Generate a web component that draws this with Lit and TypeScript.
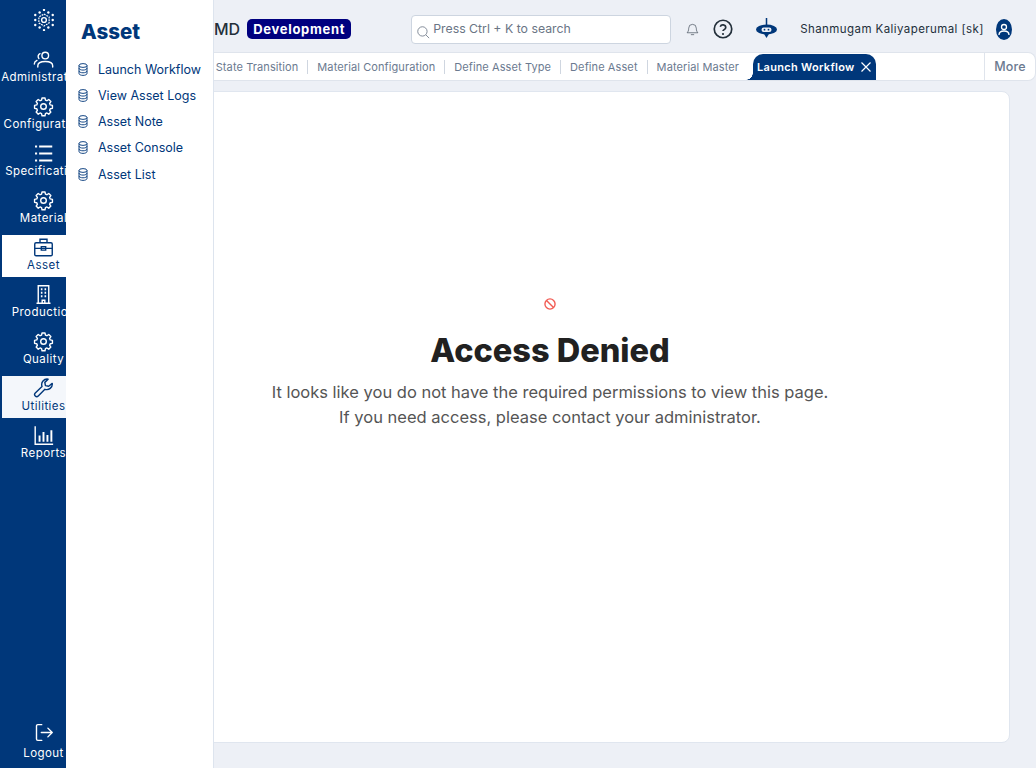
import { html, css, LitElement, svg } from 'lit';
import { customElement } from 'lit/decorators.js';

const gear = svg`<path d="M10.3 3.2h3.400l.5 2.500 1.700.7 2.100-1.400 2.400 2.400-1.400 2.100.7 1.700 2.500.5v3.400l-2.500.5-.7 1.700 1.400 2.100-2.400 2.400-2.100-1.400-1.700.7-.5 2.500h-3.400l-.5-2.500-1.700-.7-2.100 1.400-2.400-2.400 1.400-2.100-.7-1.700-2.500-.5v-3.400l2.500-.5.7-1.700-1.400-2.100 2.400-2.400 2.100 1.400 1.700-.7z" stroke-linejoin="round" transform="translate(0 -1)"/><circle cx="12" cy="12" r="3.200"/>`;

const icons: Record<string, unknown> = {
  people: svg`<circle cx="14" cy="7.500" r="3.800"/><path d="M5.500 20.500v-1.300c0-3.200 3.500-5 8.500-5s8.500 1.800 8.500 5v1.300" stroke-linecap="round"/><path d="M8 5.300a3.500 3.500 0 0 0-1.300 5.500M4.500 13c-1.800.9-3 2.300-3 4.200" stroke-linecap="round"/>`,
  gear,
  list: svg`<path d="M7 4h15M7 12h15M7 20h15" stroke-width="2.200"/><path d="M2.300 4h2.400M2.300 12h2.400M2.300 20h2.400" stroke-width="2.200"/>`,
  case: svg`<rect x="2" y="6.500" width="20" height="15" rx="1.500"/><path d="M8 6.500V2.500h8v4M2 13h20M9.500 11h5v4h-5z"/>`,
  building: svg`<path d="M6 22V2h12v20M4 22h16M10.500 22v-3.500h3V22"/><path d="M9 6h1.800M13.200 6H15M9 10h1.800M13.200 10H15M9 14h1.800M13.200 14H15" stroke-width="2.200"/>`,
  wrench: svg`<path d="M22 6.200a6.300 6.300 0 0 1-8.400 6.700L6 20.600a2.400 2.400 0 0 1-3.400-3.400l7.700-7.600a6.300 6.300 0 0 1 7-8.300L13.500 5l.7 3.700 3.700.7z" stroke-linejoin="round"/>`,
  chart: svg`<path d="M2.500 1.500v20.500h20.500"/><path d="M7.500 12v7M12 8v11M16.500 11.500V19M21 6v13" stroke-width="2.200"/>`,
  logout: svg`<path d="M10 3H5.500A1.500 1.500 0 0 0 4 4.500v15A1.500 1.500 0 0 0 5.500 21H10M9.500 12H22M17 7l5 5-5 5" stroke-linecap="round" stroke-linejoin="round"/>`,
};

const railItems = [
  { label: 'Administration', icon: 'people' },
  { label: 'Configuration', icon: 'gear' },
  { label: 'Specification', icon: 'list' },
  { label: 'Material', icon: 'gear' },
  { label: 'Asset', icon: 'case', state: 'active' },
  { label: 'Production', icon: 'building' },
  { label: 'Quality', icon: 'gear' },
  { label: 'Utilities', icon: 'wrench', state: 'hover' },
  { label: 'Reports', icon: 'chart' },
];

const menuItems = ['Launch Workflow', 'View Asset Logs', 'Asset Note', 'Asset Console', 'Asset List'];
const tabs = ['State Transition', 'Material Configuration', 'Define Asset Type', 'Define Asset', 'Material Master'];

// outer hexagon of dots for the logo: corners and edge midpoints
const logoDots = [...Array(6).keys()].flatMap((i) => {
  const a = (Math.PI / 3) * i - Math.PI / 2;
  const b = a + Math.PI / 3;
  const cx = 12 + Math.cos(a) * 11;
  const cy = 12 + Math.sin(a) * 11;
  const nx = 12 + Math.cos(b) * 11;
  const ny = 12 + Math.sin(b) * 11;
  return [
    [cx, cy],
    [(cx + nx) / 2, (cy + ny) / 2],
  ];
});

@customElement('app-root')
export class AppRoot extends LitElement {
  static styles = css`
    :host {
      display: block;
      position: relative;
      width: 1036px;
      height: 768px;
      overflow: hidden;
      background: #edf0f6;
      font-family: Inter, 'Noto Sans', sans-serif;
    }
    svg {
      display: block;
      flex: none;
      fill: none;
      stroke: currentColor;
      stroke-width: 1.6;
    }
    .shell {
      display: flex;
      height: 100%;
    }
    .rail {
      flex: none;
      width: 66px;
      height: 100%;
      box-sizing: border-box;
      overflow: hidden;
      display: flex;
      flex-direction: column;
      background: #00377a;
      color: #fff;
    }
    .logo {
      flex: none;
      height: 47px;
      width: 87px;
      display: flex;
      justify-content: center;
      padding-top: 9px;
      box-sizing: border-box;
    }
    .logo svg {
      width: 22px;
      height: 22px;
    }
    .rail-item {
      flex: none;
      box-sizing: border-box;
      width: 83px;
      height: 42px;
      margin: 0 0 5px 2px;
      padding-top: 2px;
      display: flex;
      flex-direction: column;
      align-items: center;
      font-size: 11.5px;
      line-height: 16px;
      letter-spacing: 0.45px;
      white-space: nowrap;
    }
    .rail-item svg {
      width: 21px;
      height: 21px;
    }
    .rail-item span {
      margin-top: -1px;
    }
    .rail-item.active {
      background: #fff;
      color: #00377a;
    }
    .rail-item.hover {
      background: #f4f7fb;
      color: #00377a;
    }
    .rail-item.logout {
      margin-top: auto;
      margin-bottom: 7px;
      height: auto;
      padding-top: 0;
    }
    .rail-item.logout svg {
      margin-bottom: 3px;
    }
    .flyout {
      position: absolute;
      left: 66px;
      top: 0;
      bottom: 0;
      width: 148px;
      box-sizing: border-box;
      background: #fff;
      border-right: 1px solid #dde4ee;
      color: #00377a;
      z-index: 2;
    }
    .flyout h2 {
      margin: 17px 0 10px 15px;
      font-size: 20.5px;
      line-height: 29px;
      font-weight: 800;
    }
    .flyout ul {
      list-style: none;
      margin: 0;
      padding: 0 0 0 12px;
    }
    .flyout li {
      display: flex;
      align-items: center;
      gap: 10px;
      height: 26.25px;
      font-size: 12.5px;
      white-space: nowrap;
    }
    .flyout li svg {
      width: 10px;
      height: 13px;
      stroke-width: 1;
    }
    .main {
      flex: 1;
      min-width: 0;
      display: flex;
      flex-direction: column;
    }
    .header {
      flex: none;
      height: 52px;
      box-sizing: border-box;
      padding: 6px 0 0 148px;
      display: flex;
      align-items: center;
      color: #232f3a;
    }
    .title {
      font-size: 16px;
      font-weight: 500;
    }
    .env {
      margin-left: 7px;
      padding: 0 6px;
      height: 20px;
      border-radius: 5px;
      background: #00007f;
      color: #fff;
      font-size: 13px;
      font-weight: 700;
      line-height: 20px;
      letter-spacing: 0.7px;
    }
    .search {
      flex: none;
      margin-left: 60px;
      width: 260px;
      height: 29px;
      box-sizing: border-box;
      border: 1px solid #cdd5e0;
      border-radius: 4px;
      background: #fff;
      display: flex;
      align-items: center;
      gap: 3px;
      padding: 0 0 2px 4px;
      color: #6a7585;
      font-size: 12.3px;
    }
    .search svg {
      width: 14px;
      height: 14px;
      margin-top: 7px;
      stroke-width: 1.4;
    }
    .bell {
      margin-left: 15px;
      width: 13px;
      height: 13px;
      color: #46505c;
      stroke-width: 1.300;
    }
    .help {
      margin-left: 14px;
      width: 20px;
      height: 20px;
    }
    .bot {
      margin: -2px 0 0 23px;
      width: 21px;
      height: 20px;
      color: #00377a;
    }
    .user {
      margin-left: 23px;
      font-size: 11.5px;
      letter-spacing: 0.42px;
      white-space: nowrap;
    }
    .avatar {
      margin-left: 12px;
      width: 16px;
      height: 21px;
      color: #00377a;
    }
    .tabbar {
      flex: none;
      height: 29px;
      box-sizing: border-box;
      display: flex;
      background: #fff;
      border: 1px solid #dfe4ec;
      border-left: 0;
      border-radius: 0 8px 8px 0;
      color: #6b7a90;
      font-size: 11px;
      letter-spacing: 0.1px;
    }
    .tabs {
      flex: 1;
      min-width: 0;
      overflow: hidden;
      display: flex;
      justify-content: flex-end;
      align-items: center;
      padding-right: 108px;
      white-space: nowrap;
    }
    .tab {
      flex: none;
      padding: 0 9px;
      line-height: 14px;
      border-right: 1px solid #cfd6e0;
    }
    .tab:nth-last-child(2) {
      border-right: 0;
      margin-right: 5px;
    }
    .active-tab {
      flex: none;
      position: relative;
      align-self: flex-end;
      width: 123px;
      height: 26px;
      box-sizing: border-box;
      padding-left: 4px;
      display: flex;
      align-items: center;
      gap: 5px;
      background: #00377a;
      border-radius: 10px 10px 0 0;
      color: #fff;
      font-weight: 600;
      letter-spacing: 0.3px;
    }
    .active-tab::before {
      content: '';
      position: absolute;
      left: -7px;
      bottom: 0;
      width: 7px;
      height: 7px;
      background: radial-gradient(circle at 0 0, transparent 6.500px, #00377a 7px);
    }
    .active-tab svg {
      width: 12px;
      height: 12px;
      stroke-width: 1.2;
    }
    .more {
      flex: none;
      width: 51px;
      box-sizing: border-box;
      border-left: 1px solid #dfe4ec;
      text-align: center;
      font-size: 12.5px;
      font-weight: 500;
      line-height: 28px;
    }
    .card {
      flex: 1;
      margin: 10px 26px 25px 24px;
      box-sizing: border-box;
      background: #fff;
      border: 1px solid #e0e6ef;
      border-radius: 8px;
      display: flex;
      flex-direction: column;
      align-items: center;
      padding-top: 206px;
      text-align: center;
    }
    .card svg {
      width: 12px;
      height: 12px;
      color: #f25c54;
      stroke-width: 1.500;
    }
    .card h1 {
      margin: 20px 0 8px;
      color: #212121;
      font-size: 32.5px;
      line-height: 42px;
      font-weight: 800;
    }
    .card p {
      margin: 0;
      color: #555;
      font-size: 16.5px;
      line-height: 25px;
    }
  `;

  render() {
    return html`
      <div class="shell">
        <nav class="rail">
          <div class="logo">
            <svg viewBox="0 0 24 24">
              ${logoDots.map(([x, y]) => svg`<circle cx=${x} cy=${y} r="1.300" fill="currentColor" stroke="none"></circle>`)}
              <path d="M12 5.500l5.600 3.250v6.500L12 18.500l-5.600-3.250v-6.500z" stroke-width="1.300" stroke-dasharray="2 1"></path>
              <circle cx="12" cy="12" r="2.600" stroke-width="1.500"></circle>
            </svg>
          </div>
          ${railItems.map(
            (item) => html`
              <div class="rail-item ${item.state ?? ''}">
                <svg viewBox="0 0 24 24">${icons[item.icon]}</svg>
                <span>${item.label}</span>
              </div>
            `
          )}
          <div class="rail-item logout">
            <svg viewBox="0 0 24 24">${icons.logout}</svg>
            <span>Logout</span>
          </div>
        </nav>
        <div class="main">
          <header class="header">
            <span class="title">MD</span>
            <span class="env">Development</span>
            <div class="search">
              <svg viewBox="0 0 24 24"><circle cx="11" cy="11" r="8"></circle><path d="M17 17l5.500 5.500"></path></svg>
              <span>Press Ctrl + K to search</span>
            </div>
            <svg class="bell" viewBox="0 0 24 24">
              <path d="M12 2.500a7 7 0 0 0-7 7c0 5-1.500 7-3 8.500h20c-1.500-1.500-3-3.500-3-8.500a7 7 0 0 0-7-7zM9 21.500h6"></path>
            </svg>
            <svg class="help" viewBox="0 0 24 24">
              <circle cx="12" cy="12" r="10.500" stroke-width="2"></circle>
              <path d="M8.700 9.300a3.400 3.400 0 0 1 6.600 1c0 2.300-3.300 2.600-3.300 4.200" stroke-width="2"></path>
              <circle cx="12" cy="18" r="1.300" fill="currentColor" stroke="none"></circle>
            </svg>
            <svg class="bot" viewBox="0 0 21 20">
              <path d="M10.500 0v7" stroke-width="1.500"></path>
              <ellipse cx="10.500" cy="11.500" rx="10.500" ry="5" fill="currentColor" stroke="none"></ellipse>
              <path d="M7.500 15h6l-3 5z" fill="currentColor" stroke="none"></path>
              <rect x="5.500" y="9.500" width="10" height="4.500" rx="2.250" fill="#edf0f6" stroke="none"></rect>
              <circle cx="8.500" cy="11.700" r="0.900" fill="currentColor" stroke="none"></circle>
              <circle cx="12.500" cy="11.700" r="0.900" fill="currentColor" stroke="none"></circle>
            </svg>
            <span class="user">Shanmugam Kaliyaperumal [sk]</span>
            <svg class="avatar" viewBox="0 0 16 21">
              <ellipse cx="8" cy="10.500" rx="8" ry="10.500" fill="currentColor" stroke="none"></ellipse>
              <circle cx="8" cy="8" r="2.500" stroke="#fff" stroke-width="1.300"></circle>
              <path d="M3 16c0-3 2-4 5-4s5 1 5 4" stroke="#fff" stroke-width="1.300"></path>
            </svg>
          </header>
          <div class="tabbar">
            <div class="tabs">
              ${tabs.map((tab) => html`<span class="tab">${tab}</span>`)}
              <span class="active-tab">
                Launch Workflow
                <svg viewBox="0 0 12 12"><path d="M1.500 1.500l9 9M10.500 1.500l-9 9"></path></svg>
              </span>
            </div>
            <div class="more">More</div>
          </div>
          <section class="card">
            <svg viewBox="0 0 13 13"><circle cx="6.500" cy="6.500" r="5.500"></circle><path d="M2.700 2.700l7.600 7.600"></path></svg>
            <h1>Access Denied</h1>
            <p>
              It looks like you do not have the required permissions to view this page.<br />
              If you need access, please contact your administrator.
            </p>
          </section>
        </div>
      </div>
      <aside class="flyout">
        <h2>Asset</h2>
        <ul>
          ${menuItems.map(
            (item) => html`
              <li>
                <svg viewBox="0 0 12 13" preserveAspectRatio="none">
                  <ellipse cx="6" cy="2.500" rx="4.800" ry="1.900"></ellipse>
                  <path d="M1.200 2.500v8c0 1 2.100 1.900 4.800 1.900s4.800-.9 4.800-1.900v-8M1.200 5.200c0 1 2.100 1.900 4.800 1.900s4.800-.9 4.800-1.900M1.200 7.900c0 1 2.100 1.900 4.800 1.900s4.800-.9 4.800-1.900"></path>
                </svg>
                ${item}
              </li>
            `
          )}
        </ul>
      </aside>
    `;
  }
}

declare global {
  interface HTMLElementTagNameMap {
    'app-root': AppRoot;
  }
}
